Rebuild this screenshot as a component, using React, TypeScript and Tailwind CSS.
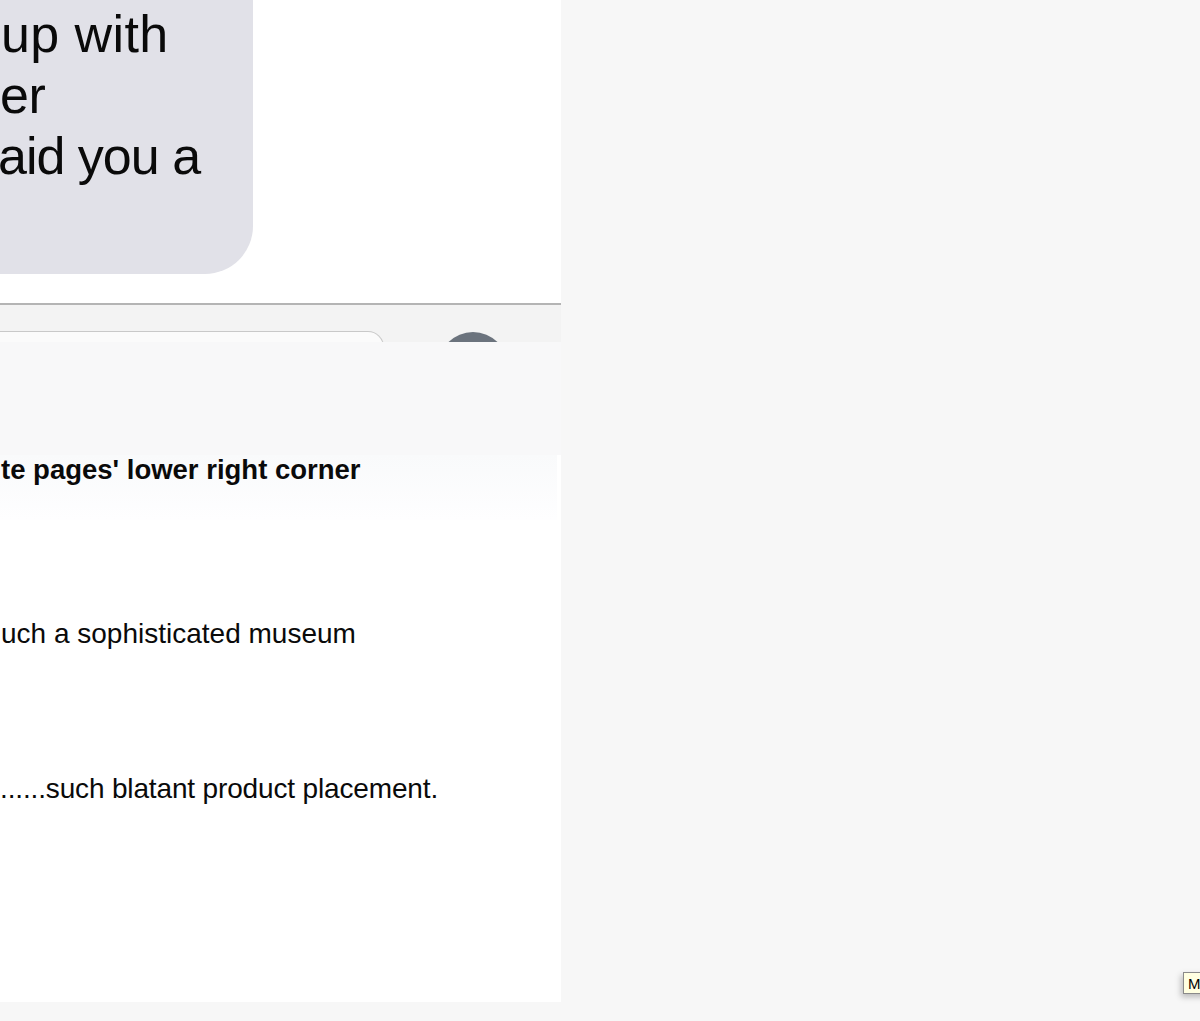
export default function App() {
  return (
    <div className="relative w-[1200px] h-[1021px] overflow-hidden bg-[#f7f7f7] font-['Liberation_Sans',Arial,sans-serif] text-black">
      <div className="flex w-[561px] h-[1002px] flex-col bg-white">
        {/* message area */}
        <div className="h-[303px] overflow-hidden bg-white">
          <div className="w-[253px] h-[274px] rounded-br-[48px] bg-[#e1e1e8] pt-[4px] overflow-hidden">
            <div className="whitespace-nowrap text-[52px] leading-[61px] text-[#0a0a0a] tracking-[-0.3px]">
              <div className="pl-[1px] tracking-[0.4px]">up with</div>
              <div>er</div>
              <div className="-ml-[2px] tracking-[-1px]">aid you a</div>
              <div>&nbsp;</div>
            </div>
          </div>
        </div>
        <div className="h-[2px] bg-[#b4b4b4]" />
        {/* input bar */}
        <div className="relative h-[37px] overflow-hidden bg-[#f3f3f3]">
          <div className="flex items-start">
            <div className="mt-[26px] h-[40px] w-[384px] rounded-tr-[16px] border border-l-0 border-[#c9c9c9] bg-[#fbfbfb]" />
            <div className="ml-[54px] mt-[27px] h-[70px] w-[70px] shrink-0 rounded-full bg-[#6b737d]" />
          </div>
        </div>
        {/* panel */}
        <div className="h-[113px] bg-[#f8f8f9]" />
        {/* content */}
        <div className="flex-1 bg-white">
          <div className="h-[65px] w-[557px] bg-gradient-to-b from-[#f9fafb] to-[#fefeff]">
            <div className="whitespace-nowrap pl-[1px] text-[27.5px] font-bold leading-[30px] text-[#0a0a0a]">
              te pages' lower right corner
            </div>
          </div>
          <div className="mt-[98px] whitespace-nowrap pl-[1px] text-[28px] leading-[32px] text-[#0a0a0a]">
            uch a sophisticated museum
          </div>
          <div className="mt-[123px] whitespace-nowrap text-[28px] leading-[32px] tracking-[-0.15px] text-[#0a0a0a]">
            ......such blatant product placement.
          </div>
        </div>
      </div>
      {/* tooltip */}
      <div className="absolute left-[1183px] top-[972px] flex h-[22px] items-center border border-[#8a8a8a] bg-[#ffffe1] pl-[4px] pr-[8px] text-[15px] leading-none text-black shadow-[-2px_3px_6px_rgba(0,0,0,0.25)]">
        M
      </div>
    </div>
  );
}
